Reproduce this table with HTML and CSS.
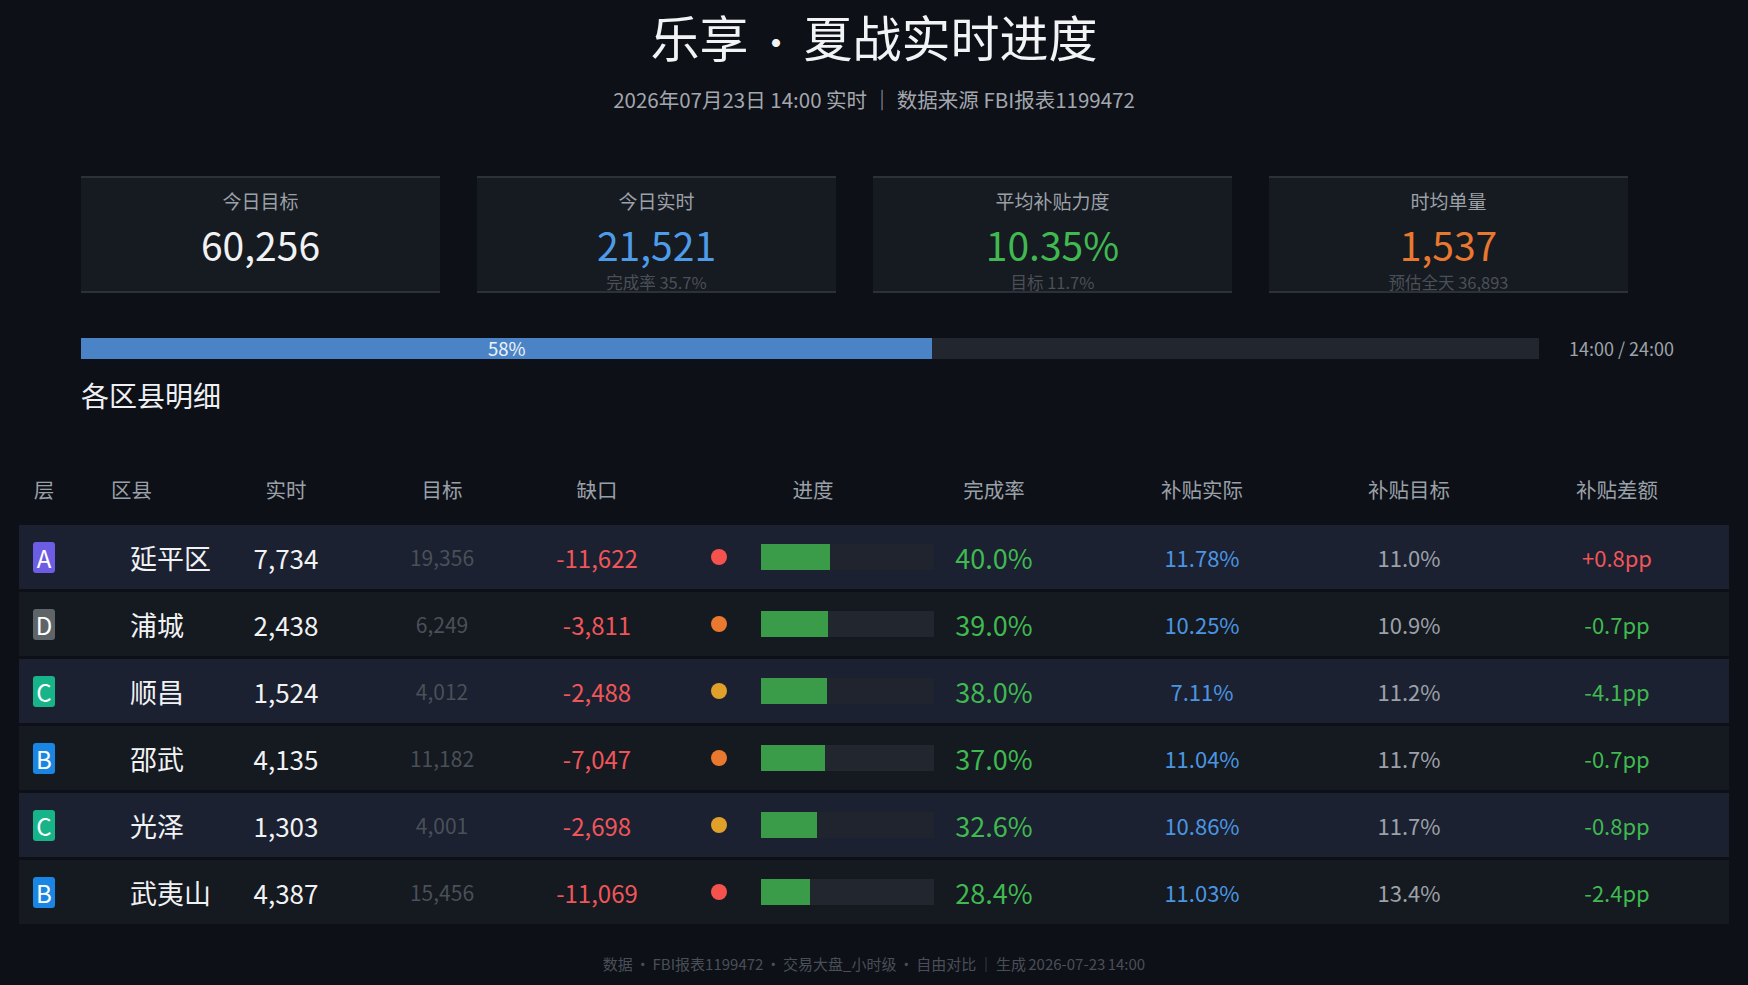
FILE: index.html
```html
<!DOCTYPE html>
<html lang="zh-CN">
<head>
<meta charset="utf-8">
<title>乐享 · 夏战实时进度</title>
<link rel="stylesheet" href="styles.css">
</head>
<body>
<div class="page">
  <header class="hero">
    <h1 class="title">乐享<span class="sep"> · </span>夏战实时进度</h1>
    <div class="subtitle">2026年07月23日 14:00 实时 ｜ 数据来源 FBI报表1199472</div>
  </header>

  <section class="summary">
    <div class="kpis">
      <div class="kpi">
        <div class="kpi-label">今日目标</div>
        <div class="kpi-value c-white">60,256</div>
      </div>
      <div class="kpi">
        <div class="kpi-label">今日实时</div>
        <div class="kpi-value c-blue">21,521</div>
        <div class="kpi-sub">完成率 35.7%</div>
      </div>
      <div class="kpi">
        <div class="kpi-label">平均补贴力度</div>
        <div class="kpi-value c-green">10.35%</div>
        <div class="kpi-sub">目标 11.7%</div>
      </div>
      <div class="kpi">
        <div class="kpi-label">时均单量</div>
        <div class="kpi-value c-orange">1,537</div>
        <div class="kpi-sub">预估全天 36,893</div>
      </div>
    </div>

    <div class="timeline">
      <div class="track"><div class="fill" style="width:58.4%">58%</div></div>
      <span class="clock">14:00 / 24:00</span>
    </div>

    <h2 class="section-title">各区县明细</h2>
  </section>

  <div class="table">
    <div class="grid thead">
      <div class="cell">层</div>
      <div class="cell name-h">区县</div>
      <div class="cell">实时</div>
      <div class="cell">目标</div>
      <div class="cell">缺口</div>
      <div class="cell prog-h">进度</div>
      <div class="cell">完成率</div>
      <div class="cell">补贴实际</div>
      <div class="cell">补贴目标</div>
      <div class="cell diff">补贴差额</div>
    </div>

    <div class="grid tr odd">
      <div class="cell"><span class="badge b-a">A</span></div>
      <div class="cell name">延平区</div>
      <div class="cell real">7,734</div>
      <div class="cell target">19,356</div>
      <div class="cell gap">-11,622</div>
      <div class="cell prog"><span class="dot d-red"></span><span class="bar"><span class="bar-fill" style="width:40%"></span></span></div>
      <div class="cell rate">40.0%</div>
      <div class="cell sub-real">11.78%</div>
      <div class="cell sub-target">11.0%</div>
      <div class="cell diff c-red">+0.8pp</div>
    </div>

    <div class="grid tr even">
      <div class="cell"><span class="badge b-d">D</span></div>
      <div class="cell name">浦城</div>
      <div class="cell real">2,438</div>
      <div class="cell target">6,249</div>
      <div class="cell gap">-3,811</div>
      <div class="cell prog"><span class="dot d-orange"></span><span class="bar"><span class="bar-fill" style="width:39%"></span></span></div>
      <div class="cell rate">39.0%</div>
      <div class="cell sub-real">10.25%</div>
      <div class="cell sub-target">10.9%</div>
      <div class="cell diff c-green">-0.7pp</div>
    </div>

    <div class="grid tr odd">
      <div class="cell"><span class="badge b-c">C</span></div>
      <div class="cell name">顺昌</div>
      <div class="cell real">1,524</div>
      <div class="cell target">4,012</div>
      <div class="cell gap">-2,488</div>
      <div class="cell prog"><span class="dot d-amber"></span><span class="bar"><span class="bar-fill" style="width:38%"></span></span></div>
      <div class="cell rate">38.0%</div>
      <div class="cell sub-real">7.11%</div>
      <div class="cell sub-target">11.2%</div>
      <div class="cell diff c-green">-4.1pp</div>
    </div>

    <div class="grid tr even">
      <div class="cell"><span class="badge b-b">B</span></div>
      <div class="cell name">邵武</div>
      <div class="cell real">4,135</div>
      <div class="cell target">11,182</div>
      <div class="cell gap">-7,047</div>
      <div class="cell prog"><span class="dot d-orange"></span><span class="bar"><span class="bar-fill" style="width:37%"></span></span></div>
      <div class="cell rate">37.0%</div>
      <div class="cell sub-real">11.04%</div>
      <div class="cell sub-target">11.7%</div>
      <div class="cell diff c-green">-0.7pp</div>
    </div>

    <div class="grid tr odd">
      <div class="cell"><span class="badge b-c">C</span></div>
      <div class="cell name">光泽</div>
      <div class="cell real">1,303</div>
      <div class="cell target">4,001</div>
      <div class="cell gap">-2,698</div>
      <div class="cell prog"><span class="dot d-amber"></span><span class="bar"><span class="bar-fill" style="width:32.6%"></span></span></div>
      <div class="cell rate">32.6%</div>
      <div class="cell sub-real">10.86%</div>
      <div class="cell sub-target">11.7%</div>
      <div class="cell diff c-green">-0.8pp</div>
    </div>

    <div class="grid tr even">
      <div class="cell"><span class="badge b-b">B</span></div>
      <div class="cell name">武夷山</div>
      <div class="cell real">4,387</div>
      <div class="cell target">15,456</div>
      <div class="cell gap">-11,069</div>
      <div class="cell prog"><span class="dot d-red"></span><span class="bar"><span class="bar-fill" style="width:28.4%"></span></span></div>
      <div class="cell rate">28.4%</div>
      <div class="cell sub-real">11.03%</div>
      <div class="cell sub-target">13.4%</div>
      <div class="cell diff c-green">-2.4pp</div>
    </div>
  </div>

  <footer class="footer">数据 · FBI报表1199472 · 交易大盘_小时级 · 自由对比 ｜ 生成 2026-07-23 14:00</footer>
</div>
</body>
</html>
```

FILE: styles.css
```css
* { box-sizing: border-box; }

html, body {
  margin: 0;
  padding: 0;
  background: #0d1017;
}

body {
  font-family: "Noto Sans CJK SC", "Noto Sans", sans-serif;
  color: #eceef2;
}

.page {
  width: 1748px;
  height: 985px;
  padding: 0 19px;
  overflow: hidden;
}

/* ---------- header ---------- */
.hero {
  text-align: center;
  padding-top: 0;
}

.title {
  margin: 0;
  font-size: 49px;
  font-weight: 400;
  line-height: 71px;
  color: #f2f3f5;
}

.title .sep {
  font-size: 38px;
  line-height: 1;
}

.subtitle {
  margin-top: 14px;
  font-size: 20.5px;
  line-height: 28px;
  color: #a3a7ae;
}

/* ---------- summary ---------- */
.summary {
  margin-left: 62px;
}

.kpis {
  display: flex;
  gap: 37px;
  margin-top: 63px;
}

.kpi {
  width: 359px;
  height: 117px;
  background: #161a21;
  border-top: 2px solid #2c3139;
  border-bottom: 2px solid #2c3139;
  display: flex;
  flex-direction: column;
  align-items: center;
  padding-top: 10px;
  overflow: hidden;
}

.kpi-label {
  font-size: 19px;
  line-height: 26px;
  color: #9ca1a8;
}

.kpi-value {
  margin-top: 8px;
  font-size: 39px;
  line-height: 44px;
}

.kpi-sub {
  margin-top: 6px;
  font-size: 16.5px;
  line-height: 20px;
  color: #4b5058;
}

.c-white { color: #f1f2f4; }
.c-blue { color: #4e9ce9; }
.c-green { color: #3fb950; }
.c-orange { color: #e8782f; }
.c-red { color: #f0555a; }

.timeline {
  display: flex;
  align-items: center;
  gap: 30px;
  margin-top: 42px;
}

.track {
  width: 1458px;
  height: 21px;
  background: #22262e;
}

.fill {
  height: 100%;
  background: #4a84c6;
  color: #eef3fa;
  font-size: 18.5px;
  line-height: 21px;
  text-align: center;
}

.clock {
  font-size: 18px;
  color: #9ea3aa;
}

.section-title {
  margin: 16px 0 0;
  font-size: 28px;
  font-weight: 400;
  line-height: 36px;
  color: #eef0f3;
}

/* ---------- table ---------- */
.table {
  margin-top: 54px;
}

.grid {
  display: grid;
  grid-template-columns: 50px 159px 116px 196px 114px 296px 88px 328px 86px 277px;
  align-items: center;
}

.cell {
  display: flex;
  justify-content: center;
  align-items: center;
  white-space: nowrap;
}

.thead {
  height: 44px;
  margin-bottom: 14px;
  font-size: 20.5px;
  color: #9aa0a8;
}

.thead .name-h {
  justify-content: flex-start;
  padding-left: 42px;
}

.thead .prog-h {
  padding-left: 22px;
}

.diff {
  padding-left: 53px;
}

.tr {
  height: 64px;
  margin-bottom: 3px;
}

.tr.odd { background: #1b2130; }
.tr.even { background: #151920; }

.badge {
  width: 22px;
  height: 31px;
  border-radius: 3px;
  color: #ffffff;
  font-size: 24px;
  line-height: 31px;
  text-align: center;
}

.b-a { background: #6d5ce4; }
.b-d { background: #5f6469; }
.b-c { background: #17b48a; }
.b-b { background: #1a86e3; }

.name {
  justify-content: flex-start;
  padding-left: 61px;
  font-size: 27px;
  color: #f1f2f4;
}

.real {
  font-size: 26px;
  color: #f1f2f4;
}

.target {
  font-size: 21px;
  color: #4a5058;
}

.gap {
  font-size: 24px;
  color: #f0555a;
}

.prog {
  justify-content: flex-start;
  padding-left: 57px;
  gap: 34px;
}

.dot {
  width: 16px;
  height: 16px;
  border-radius: 50%;
}

.d-red { background: #f5524e; }
.d-orange { background: #e8792e; }
.d-amber { background: #e0a02a; }

.bar {
  display: block;
  width: 173px;
  height: 26px;
  background: #22262e;
}

.tr.odd .bar { background: #1f242e; }

.bar-fill {
  display: block;
  height: 100%;
  background: #3a9c48;
}

.rate {
  font-size: 27px;
  color: #3fb950;
}

.sub-real {
  font-size: 22px;
  color: #4b95e2;
}

.sub-target {
  font-size: 22px;
  color: #9ca1a9;
}

.tr .diff {
  font-size: 22px;
}

/* ---------- footer ---------- */
.footer {
  margin-top: 30px;
  text-align: center;
  font-size: 15px;
  line-height: 20px;
  word-spacing: -1px;
  color: #4a4f57;
}
```
